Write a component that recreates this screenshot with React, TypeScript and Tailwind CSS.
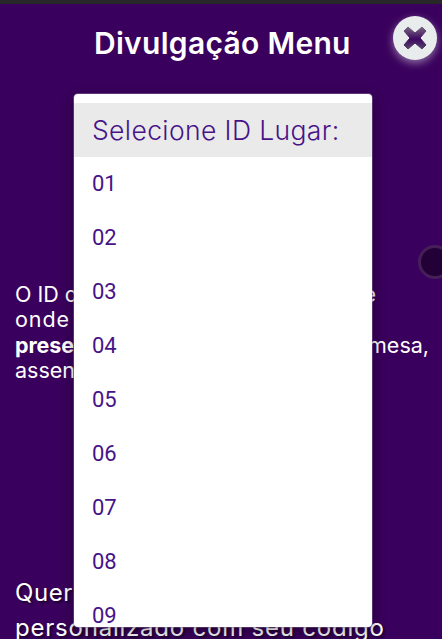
const places = ['01', '02', '03', '04', '05', '06', '07', '08', '09'];

function CloseButton() {
  return (
    <button
      aria-label="Fechar"
      className="absolute left-[393px] top-4 h-11 w-11 rounded-full bg-[#e9eced] shadow-[0_3px_8px_0px_rgba(233,236,237,0.5)]"
    >
      <svg viewBox="0 0 44 44" className="h-11 w-11">
        <defs>
          <linearGradient id="cross" x1="0" y1="0" x2="0" y2="1">
            <stop offset="0" stopColor="#77677f" />
            <stop offset="0.55" stopColor="#3c0860" />
            <stop offset="1" stopColor="#59456a" />
          </linearGradient>
        </defs>
        <path
          d="M11 15 15 11 22 17 29 11 33 15 27 22 33 29 29 33 22 27 15 33 11 29 17 22Z"
          fill="url(#cross)"
          stroke="url(#cross)"
          strokeWidth="1"
          strokeLinejoin="round"
        />
      </svg>
    </button>
  );
}

function PlaceMenu() {
  return (
    <div className="absolute left-[74px] top-[94px] h-[533px] w-[298px] overflow-hidden rounded-[4px] bg-white pt-[9px] text-[#461389] shadow-[0_4px_14px_2px_rgba(0,0,0,0.3),0_0_0_1px_rgba(180,150,195,0.4)]">
      <div className="flex h-[54px] items-center whitespace-nowrap bg-[#eaeaea] pl-[18px] pt-px text-[26.5px] font-light tracking-[0.38px]">
        <span>Selecione ID Lugar:</span>
      </div>
      {places.map((place) => (
        <div
          key={place}
          className="flex h-[54px] items-center pb-px pl-[18px] font-['Roboto',sans-serif] text-[22px] font-normal"
        >
          {place}
        </div>
      ))}
    </div>
  );
}

export default function App() {
  return (
    <main className="relative h-[639px] w-[442px] overflow-hidden border-t-4 border-[#282828] bg-[#3a005d] font-['Inter',sans-serif] text-white">
      <div className="relative -top-1 h-[639px]">
        <h1 className="whitespace-nowrap pl-[94px] pt-[24px] text-[30px] font-semibold leading-[39px] tracking-[0.3px]">
          Divulgação Menu
        </h1>
        <div className="mt-[219px] whitespace-nowrap pl-[15px] text-[21.5px] leading-[25.4px]">
          <div className="flex w-[361px] justify-between">
            <span>O ID d</span>
            <span>e</span>
          </div>
          <div className="tracking-[0.9px]">onde</div>
          <div className="flex w-[414px] justify-between">
            <strong className="font-bold tracking-[-0.1px]">prese</strong>
            <span>mesa,</span>
          </div>
          <div>assen</div>
        </div>
        <p className="mt-[191px] whitespace-nowrap pl-[15px] text-[24px] leading-[35px] [text-shadow:2px_2px_2px_rgba(0,0,0,0.5)]">
          <span className="tracking-[0.6px]">Quer</span>
          <br />
          <span className="tracking-[0.78px]">personalizado com seu código</span>
        </p>
        <div className="absolute left-[418px] top-[245px] h-[34px] w-[34px] rounded-full border-[3px] border-[#452058] bg-[#230036]" />
        <PlaceMenu />
        <CloseButton />
      </div>
    </main>
  );
}
